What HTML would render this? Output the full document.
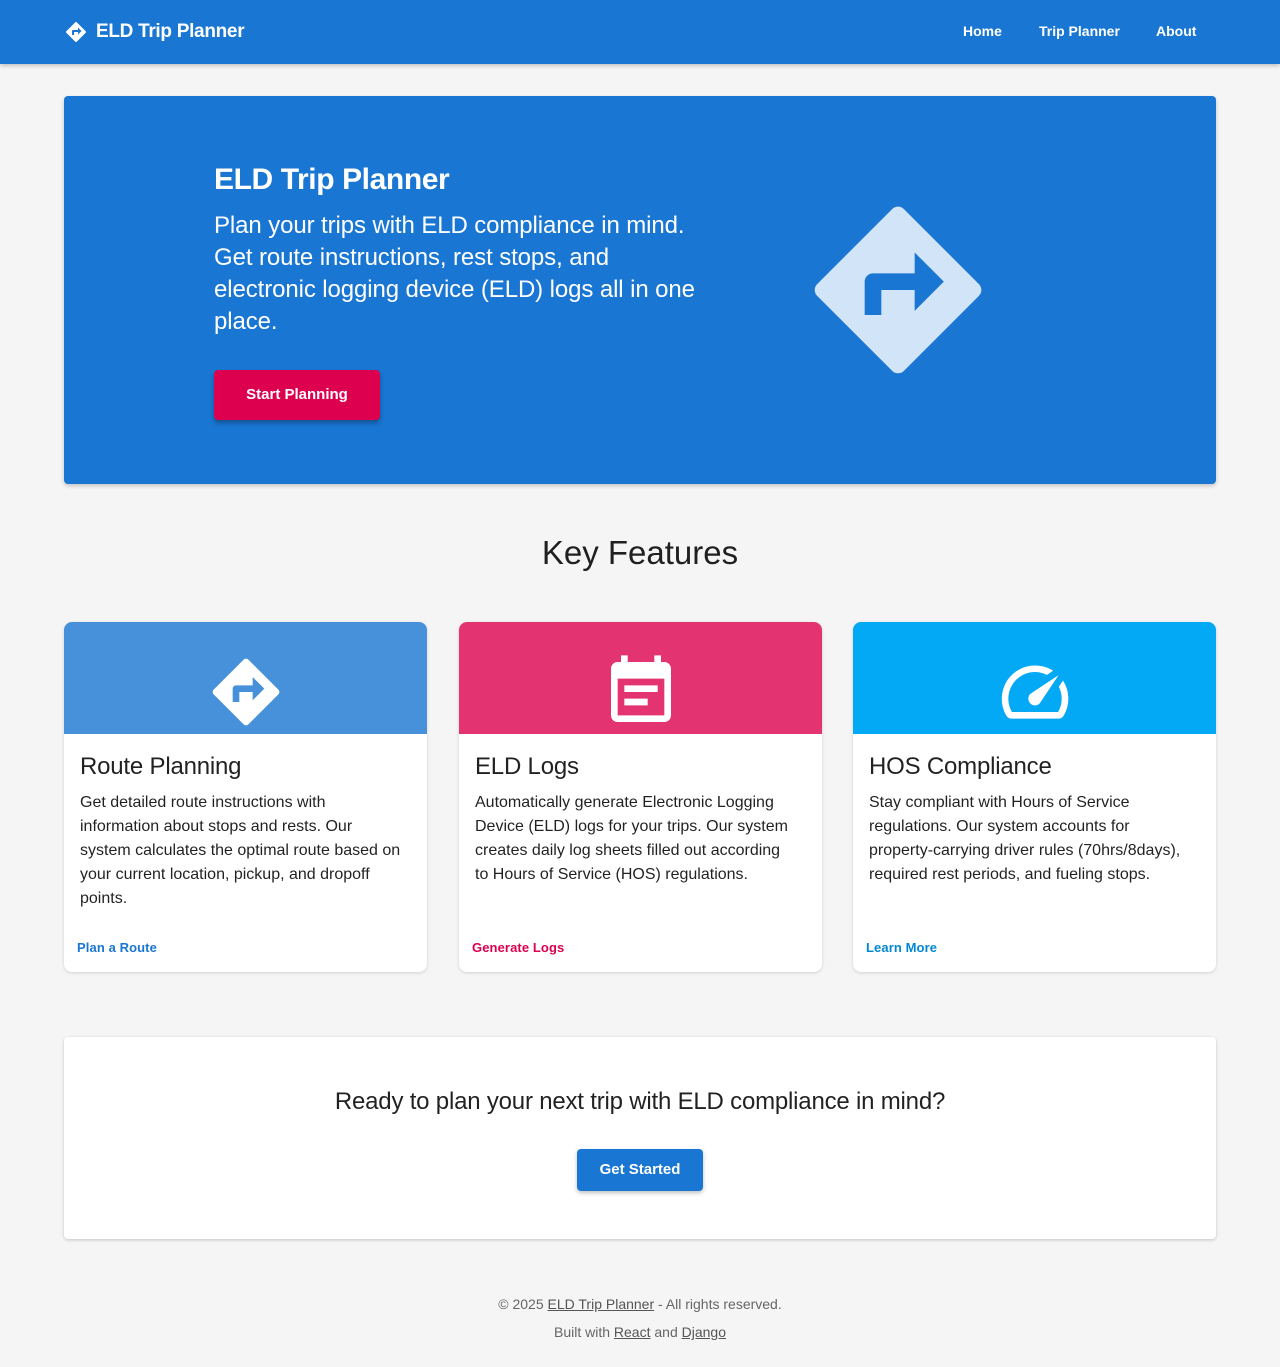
<!DOCTYPE html>
<html><head><meta charset="utf-8"><style>
*{box-sizing:border-box;margin:0;padding:0}
body{width:1280px;height:1367px;background:#f5f5f5;font-family:"Liberation Sans",sans-serif;color:rgba(0,0,0,.87);position:relative;overflow:hidden}
.nav{position:absolute;left:0;top:0;width:1280px;height:64px;background:#1976d2;box-shadow:0 2px 4px rgba(0,0,0,.2)}
.brand{position:absolute;left:64px;top:20px;color:#fff;font-weight:bold;font-size:19px;letter-spacing:-0.3px;line-height:24px;display:flex;align-items:center}
.brand svg{margin-right:8px}
.nav a{position:absolute;top:22px;color:#fff;font-weight:bold;font-size:14px;line-height:18px;text-decoration:none}
.hero{position:absolute;left:64px;top:96px;width:1152px;height:388px;background:#1976d2;border-radius:4px;box-shadow:0 2px 4px rgba(0,0,0,.2);color:#fff}
.hero h1{position:absolute;left:150px;top:65px;font-size:30px;letter-spacing:-0.4px;line-height:38px;font-weight:bold}
.hero p{position:absolute;left:150px;top:114px;width:500px;font-size:24px;line-height:32px;letter-spacing:-0.1px}
.btn1{position:absolute;left:150px;top:274px;width:166px;height:50px;background:#dc004e;border-radius:4px;font-weight:bold;font-size:15px;line-height:50px;text-align:center;box-shadow:0 3px 5px rgba(0,0,0,.3)}
.hero svg{position:absolute;left:734px;top:94px}
h2{position:absolute;top:532px;left:0;width:1280px;text-align:center;font-size:33px;font-weight:normal;line-height:42px}
.card{position:absolute;top:622px;width:363px;height:350px;background:#fff;border-radius:8px;overflow:hidden;box-shadow:0 1px 3px rgba(0,0,0,.15)}
.ch{height:112px;display:flex;align-items:center;justify-content:center;padding-top:28px}
.card h3{position:absolute;left:16px;top:129px;font-size:24px;font-weight:normal;line-height:32px;letter-spacing:-0.2px}
.card p{position:absolute;left:16px;top:169px;width:345px;font-size:16px;line-height:24px;white-space:nowrap}
.card a{position:absolute;left:13px;top:318px;font-size:13px;font-weight:bold;letter-spacing:.1px;text-decoration:none}
.cta{position:absolute;left:64px;top:1037px;width:1152px;height:202px;background:#fff;border-radius:4px;box-shadow:0 1px 3px rgba(0,0,0,.2)}
.cta p{position:absolute;top:50px;width:100%;text-align:center;font-size:24px;line-height:30px;letter-spacing:-0.2px}
.btn2{position:absolute;left:513px;top:112px;width:126px;height:42px;background:#1976d2;color:#fff;border-radius:4px;font-weight:bold;font-size:15px;line-height:42px;text-align:center;box-shadow:0 2px 4px rgba(0,0,0,.25)}
.foot{position:absolute;left:0;width:1280px;text-align:center;font-size:14px;color:#666;line-height:20px}
.foot u{color:#555}
</style></head><body>
<div class="nav">
<div class="brand"><svg width="24" height="24" viewBox="0 0 24 24"><path fill="#fff" d="M21.71 11.29l-9-9a.996.996 0 00-1.41 0l-9 9c-.39.39-.39 1.02 0 1.41l9 9c.39.39 1.02.39 1.41 0l9-9c.39-.38.39-1.01 0-1.41zM14 14.5V12h-4v3H8v-4c0-.55.45-1 1-1h5V7.5l3.5 3.5-3.5 3.5z"/></svg>ELD Trip Planner</div>
<a style="left:963px">Home</a><a style="left:1039px">Trip Planner</a><a style="left:1156px">About</a>
</div>
<div class="hero">
<h1>ELD Trip Planner</h1>
<p>Plan your trips with ELD compliance in mind. Get route instructions, rest stops, and electronic logging device (ELD) logs all in one place.</p>
<div class="btn1">Start Planning</div>
<svg width="200" height="200" viewBox="0 0 24 24"><path fill="#d1e4f8" d="M21.71 11.29l-9-9a.996.996 0 00-1.41 0l-9 9c-.39.39-.39 1.02 0 1.41l9 9c.39.39 1.02.39 1.41 0l9-9c.39-.38.39-1.01 0-1.41zM14 14.5V12h-4v3H8v-4c0-.55.45-1 1-1h5V7.5l3.5 3.5-3.5 3.5z"/></svg>
</div>
<h2>Key Features</h2>
<div class="card" style="left:64px"><div class="ch" style="background:#4791db"><svg width="80" height="80" viewBox="0 0 24 24"><path fill="#fff" d="M21.71 11.29l-9-9a.996.996 0 00-1.41 0l-9 9c-.39.39-.39 1.02 0 1.41l9 9c.39.39 1.02.39 1.41 0l9-9c.39-.38.39-1.01 0-1.41zM14 14.5V12h-4v3H8v-4c0-.55.45-1 1-1h5V7.5l3.5 3.5-3.5 3.5z"/></svg></div>
<h3>Route Planning</h3><p>Get detailed route instructions with<br>information about stops and rests. Our<br>system calculates the optimal route based on<br>your current location, pickup, and dropoff<br>points.</p><a style="color:#1976d2">Plan a Route</a></div>
<div class="card" style="left:459px"><div class="ch" style="background:#e33371"><svg width="80" height="80" viewBox="0 0 24 24"><path fill="#fff" d="M17 10H7v2h10v-2zm2-7h-1V1h-2v2H8V1H6v2H5c-1.11 0-1.99.9-1.99 2L3 19c0 1.1.89 2 2 2h14c1.1 0 2-.9 2-2V5c0-1.1-.9-2-2-2zm0 16H5V8h14v11zm-5-5H7v2h7v-2z"/></svg></div>
<h3>ELD Logs</h3><p>Automatically generate Electronic Logging<br>Device (ELD) logs for your trips. Our system<br>creates daily log sheets filled out according<br>to Hours of Service (HOS) regulations.</p><a style="color:#dc004e">Generate Logs</a></div>
<div class="card" style="left:853px"><div class="ch" style="background:#03a9f4"><svg width="80" height="80" viewBox="0 0 24 24"><path fill="#fff" d="M20.38 8.57l-1.23 1.85a8 8 0 01-.22 7.58H5.07A8 8 0 0115.58 6.85l1.85-1.23A10 10 0 003.35 19a2 2 0 001.72 1h13.850a2 2 0 001.74-1 10 10 0 00-.27-10.44zm-9.79 6.84a2 2 0 002.83 0l5.66-8.49-8.49 5.66a2 2 0 000 2.83z"/></svg></div>
<h3>HOS Compliance</h3><p>Stay compliant with Hours of Service<br>regulations. Our system accounts for<br>property-carrying driver rules (70hrs/8days),<br>required rest periods, and fueling stops.</p><a style="color:#0288d1">Learn More</a></div>
<div class="cta"><p>Ready to plan your next trip with ELD compliance in mind?</p><div class="btn2">Get Started</div></div>
<div class="foot" style="top:1294px">© 2025 <u>ELD Trip Planner</u> - All rights reserved.</div>
<div class="foot" style="top:1322px">Built with <u>React</u> and <u>Django</u></div>
</body></html>
